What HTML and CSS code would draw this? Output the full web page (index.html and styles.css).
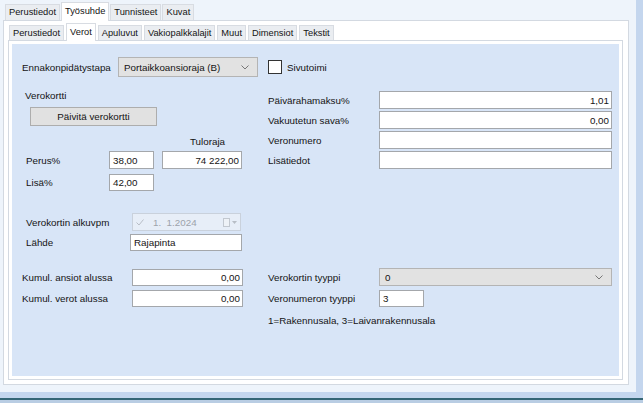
FILE: index.html
```html
<!DOCTYPE html>
<html lang="fi">
<head>
<meta charset="utf-8">
<title>Verot</title>
<link rel="stylesheet" href="styles.css">
</head>
<body>
<div class="app">
  <div class="main">
    <div class="tabs-outer">
      <div class="tab">Perustiedot</div>
      <div class="tab sel">Työsuhde</div>
      <div class="tab">Tunnisteet</div>
      <div class="tab">Kuvat</div>
    </div>
    <div class="outer-panel">
      <div class="tabs-inner">
        <div class="tab">Perustiedot</div>
        <div class="tab sel">Verot</div>
        <div class="tab">Apuluvut</div>
        <div class="tab">Vakiopalkkalajit</div>
        <div class="tab">Muut</div>
        <div class="tab">Dimensiot</div>
        <div class="tab">Tekstit</div>
      </div>
      <div class="inner-panel">
        <div class="content">
          <div class="band band1">
            <div class="col-left row">
              <span class="lbl w96">Ennakonpidätystapa</span>
              <div class="select w140"><span>Portaikkoansioraja (B)</span><svg class="chev" width="8" height="5" viewBox="0 0 8 5"><path d="M0.5 0.5 L4 4 L7.5 0.5" fill="none" stroke="#777" stroke-width="1"/></svg></div>
            </div>
            <div class="col-right row">
              <span class="checkbox"></span><span class="cblbl">Sivutoimi</span>
            </div>
          </div>
          <div class="band band2">
            <div class="col-left group">
              <div class="caption">Verokortti</div>
              <div class="button">Päivitä verokortti</div>
              <div class="caption tuloraja">Tuloraja</div>
              <div class="row h18 perus">
                <span class="lbl w84">Perus%</span>
                <div class="inp w45">38,00</div>
                <div class="inp r w80 ml8">74 222,00</div>
              </div>
              <div class="row h17 lisa">
                <span class="lbl w84">Lisä%</span>
                <div class="inp w45">42,00</div>
              </div>
              <div class="row h18 pvm">
                <span class="lbl w107">Verokortin alkuvpm</span>
                <div class="date">
                  <svg class="chk" width="8" height="7" viewBox="0 0 8 7"><path d="M0.5 3.5 L3 6 L7.5 0.5" fill="none" stroke="#b8bec6" stroke-width="1"/></svg>
                  <span class="datetxt">1.&nbsp;&nbsp;1.2024</span>
                  <span class="cal"></span>
                  <svg class="dd" width="5" height="3" viewBox="0 0 5 3"><path d="M0 0 H5 L2.5 3 Z" fill="#b8bec6"/></svg>
                </div>
              </div>
              <div class="row h17 lahde">
                <span class="lbl w105">Lähde</span>
                <div class="inp w112">Rajapinta</div>
              </div>
            </div>
            <div class="col-right fields">
              <div class="row h18"><span class="lbl w111">Päivärahamaksu%</span><div class="inp r w233">1,01</div></div>
              <div class="row h18"><span class="lbl w111">Vakuutetun sava%</span><div class="inp r w233">0,00</div></div>
              <div class="row h18"><span class="lbl w111">Veronumero</span><div class="inp w233"></div></div>
              <div class="row h18"><span class="lbl w111">Lisätiedot</span><div class="inp w233"></div></div>
            </div>
          </div>
          <div class="band band3">
            <div class="col-left kumul">
              <div class="row h17"><span class="lbl w110">Kumul. ansiot alussa</span><div class="inp r w111">0,00</div></div>
              <div class="row h17"><span class="lbl w110">Kumul. verot alussa</span><div class="inp r w111">0,00</div></div>
            </div>
            <div class="col-right tyyppi">
              <div class="row h18"><span class="lbl w111">Verokortin tyyppi</span><div class="select w233"><span>0</span><svg class="chev" width="8" height="5" viewBox="0 0 8 5"><path d="M0.5 0.5 L4 4 L7.5 0.5" fill="none" stroke="#777" stroke-width="1"/></svg></div></div>
              <div class="row h17 vt"><span class="lbl w111">Veronumeron tyyppi</span><div class="inp w45">3</div></div>
              <div class="note">1=Rakennusala, 3=Laivanrakennusala</div>
            </div>
          </div>
        </div>
      </div>
    </div>
  </div>
  <div class="vstrip"></div>
</div>
<div class="hstrip"></div>
<div class="darkline"></div>
<div class="under"></div>
</body>
</html>
```

FILE: styles.css
```css
* { box-sizing: border-box; }
html, body { margin: 0; padding: 0; }
body {
  width: 643px;
  height: 403px;
  overflow: hidden;
  background: #eef4fb;
  font-family: "Liberation Sans", Arial, sans-serif;
  font-size: 9.8px;
  color: #141414;
}
.app { display: flex; height: 392px; }
.main { width: 636px; }
.vstrip { width: 7px; background: #c4d6ee; }
.hstrip { height: 6px; background: #c4d6ee; }
.darkline { height: 2px; background: #356676; }
.under { height: 3px; background: #b9cde3; }

/* tabs */
.tabs-outer {
  display: flex;
  align-items: flex-end;
  height: 20px;
  padding-left: 5px;
}
.tabs-inner {
  display: flex;
  align-items: flex-end;
  height: 19px;
  padding-left: 1px;
}
.tab {
  height: 16px;
  padding: 0 3px;
  line-height: 15px;
  font-size: 9.3px;
  background: #eaedf1;
  border: 1px solid #d8dce2;
  border-bottom: none;
  margin-right: 1px;
  white-space: nowrap;
}
.tab.sel {
  height: 19px;
  line-height: 17px;
  background: #fff;
  margin-bottom: -1px;
  position: relative;
  z-index: 1;
}
.tabs-inner .tab { height: 15px; line-height: 14px; padding: 0 3px; margin-right: 2px; }
.tabs-inner .tab.sel { height: 18px; line-height: 16px; }

.outer-panel {
  margin-left: 3px;
  width: 626px;
  height: 365px;
  background: #fff;
  border: 1px solid #d3d9e1;
  padding-left: 4px;
}
.inner-panel {
  width: 615px;
  height: 340px;
  border: 1px solid #d3d9e1;
  padding: 3px;
  background: #fff;
}
.content {
  height: 332px;
  background: #d8e5f7;
  padding-top: 13px;
  display: flex;
  flex-direction: column;
}

.band { display: flex; }
.band1 { height: 20px; }
.band2 { height: 174px; }
.col-left { width: 246px; padding-left: 10px; }
.col-right { flex: 1; padding-left: 10px; }

.row { display: flex; align-items: center; }
.h18 { height: 18px; }
.h17 { height: 17px; }
.lbl { white-space: nowrap; flex: none; }
.w84 { width: 84px; }
.w96 { width: 96px; }
.w105 { width: 105px; }
.w107 { width: 107px; }
.w110 { width: 110px; }
.w111 { width: 111px; }
.w45 { width: 45px; }
.w80 { width: 80px; }
.w112 { width: 112px; }
.w140 { width: 140px; }
.w233 { width: 233px; }
.ml8 { margin-left: 8px; }

.inp {
  height: 100%;
  background: #fff;
  border: 1px solid #a4a7ab;
  padding: 0 3px;
  display: flex;
  align-items: center;
  white-space: nowrap;
  flex: none;
}
.inp.r { justify-content: flex-end; padding-right: 2px; }

.select {
  height: 100%;
  background: #e2e2e2;
  border: 1px solid #b4b4b4;
  display: flex;
  align-items: center;
  justify-content: space-between;
  padding: 0 8px 0 5px;
  flex: none;
}
.band1 .select { height: 20px; }
.chev { display: block; }

.checkbox {
  width: 14px;
  height: 14px;
  background: #fff;
  border: 1px solid #333;
  flex: none;
}
.cblbl { margin-left: 5px; }

/* group */
.group { padding-left: 13px; }
.caption { line-height: 12px; margin-top: 13px; }
.button {
  margin-top: 5px;
  margin-left: 5px;
  width: 127px;
  height: 19px;
  background: #e1e1e1;
  border: 1px solid #adadad;
  display: flex;
  align-items: center;
  justify-content: center;
}
.tuloraja { margin-top: 10px; margin-left: 165px; }
.group .row .lbl { padding-left: 1px; }
.perus { margin-top: 3px; }
.lisa { margin-top: 5px; }
.pvm { margin-top: 22px; }
.lahde { margin-top: 3px; }

.date {
  width: 109px;
  height: 100%;
  background: #e7eef8;
  border: 1px solid #c9d1dc;
  display: flex;
  align-items: center;
  padding-left: 3px;
  color: #9da3ab;
  flex: none;
}
.chk { display: block; }
.datetxt { margin-left: 9px; }
.cal {
  width: 7px;
  height: 9px;
  border: 1px solid #c2c8d0;
  background: #eef2f7;
  margin-left: 26px;
}
.dd { display: block; margin-left: 2px; }

.fields { padding-top: 14px; display: flex; flex-direction: column; gap: 2px; }

.kumul { padding-top: 18px; display: flex; flex-direction: column; gap: 4px; }
.tyyppi { padding-top: 17px; }
.vt { margin-top: 4px; }
.note { margin-top: 8px; line-height: 12px; }
```
